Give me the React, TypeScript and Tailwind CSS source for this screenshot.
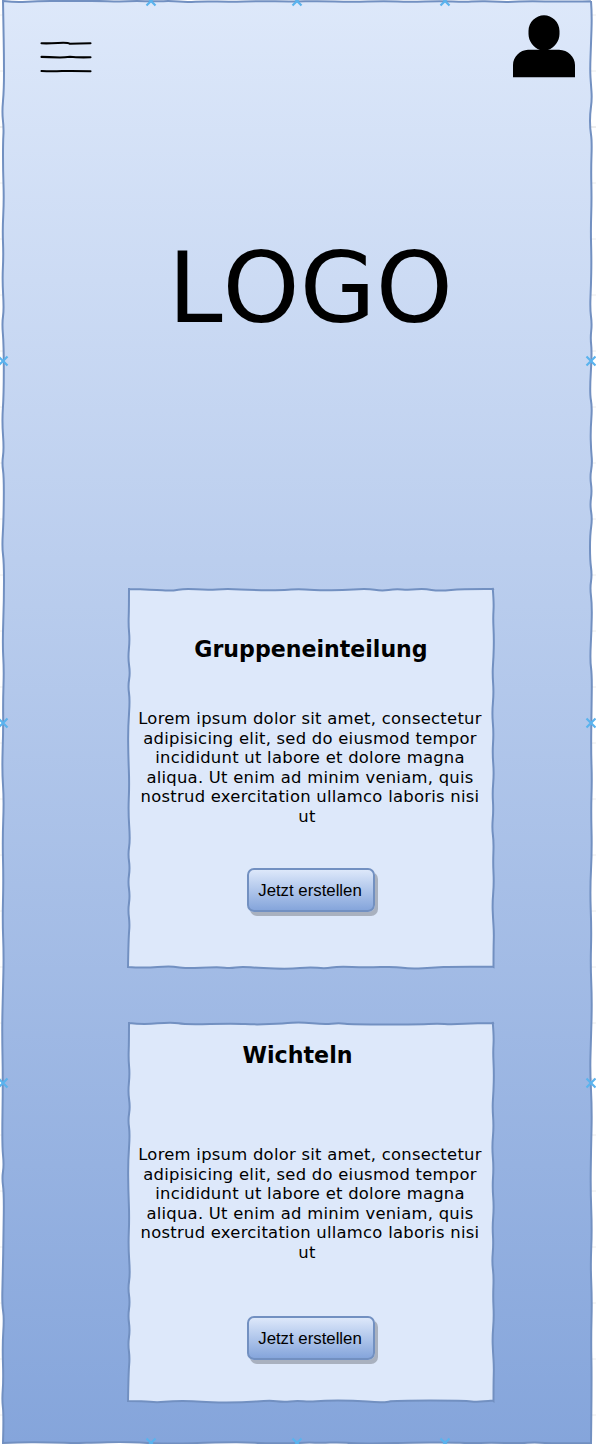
import React from "react";

type Pt = [number, number];

// Quadratic smoothing through the midpoints of neighbouring points.
function smooth(points: Pt[]): string {
  let d = "";
  for (let i = 1; i < points.length - 1; i++) {
    const [x, y] = points[i];
    const [nx, ny] = points[i + 1];
    const last = i === points.length - 2;
    d += ` Q${x},${y} ${last ? nx : (x + nx) / 2},${last ? ny : (y + ny) / 2}`;
  }
  return d;
}

function outline(top: Pt[], right: Pt[], bottom: Pt[], left: Pt[]): string {
  const b = [...bottom].reverse();
  const l = [...left].reverse();
  return `M${top[0]}${smooth(top)} L${right[0]}${smooth(right)} L${b[0]}${smooth(b)} L${l[0]}${smooth(l)} Z`;
}

const horizontal = (xs: number[], ys: number[]): Pt[] => xs.map((x, i) => [x, ys[i]]);
const vertical = (ys: number[], xs: number[]): Pt[] => ys.map((y, i) => [xs[i], y]);

const frame = outline(
  horizontal(
    [3, 15, 30, 45, 70, 95, 120, 135, 155, 172, 186, 205, 230, 260, 290, 320, 350, 385, 410, 440, 465, 478, 492, 508, 530, 560, 591],
    [1, 2.3, 1.6, 0.9, 1.2, 0.8, 1.6, 0.9, 1.4, 0.9, 2.2, 1.2, 1.9, 1, 1.7, 0.9, 2, 1.1, 2, 1, 2, 1.2, 1.4, 2.2, 0.9, 1.9, 1.2],
  ),
  vertical(
    [1, 14, 45, 70, 85, 99, 114, 128, 141, 170, 200, 230, 260, 285, 309, 324, 338, 352, 393, 407, 430, 450, 463, 477, 491, 505, 519, 535, 560, 575, 588, 604, 630, 660, 675, 710, 750, 780, 810, 850, 890, 930, 965, 1000, 1040, 1070, 1110, 1150, 1190, 1230, 1265, 1300, 1340, 1380, 1443],
    [591, 592, 591, 590, 591, 592, 590, 590, 592, 591, 591.7, 590.7, 591.5, 591, 590, 592, 590.4, 592, 589.6, 592.2, 590.5, 591, 592.3, 590, 592, 590, 592.3, 590, 590, 592, 590, 592, 591.5, 590, 592, 591.5, 591, 592, 591, 592, 590, 591.5, 590.5, 592, 591, 590, 592, 591, 590.5, 592, 590.5, 592, 591, 591.8, 591],
  ),
  horizontal(
    [3, 20, 50, 78, 95, 120, 140, 155, 180, 205, 225, 245, 265, 290, 308, 322, 338, 355, 380, 410, 450, 470, 490, 520, 535, 555, 591],
    [1443, 1442, 1442.3, 1443.2, 1442.5, 1442, 1442.5, 1443.4, 1443.6, 1442.7, 1442.2, 1442.1, 1443.3, 1443.4, 1442.4, 1443, 1442.2, 1443.3, 1443.5, 1442.6, 1442.3, 1443.2, 1442.6, 1443.2, 1442.4, 1443.4, 1443],
  ),
  vertical(
    [1, 20, 55, 90, 112, 128, 142, 170, 200, 230, 255, 280, 310, 323, 345, 395, 421, 449, 463, 477, 520, 547, 562, 600, 644, 670, 700, 730, 770, 800, 840, 880, 920, 955, 990, 1030, 1080, 1145, 1165, 1178, 1193, 1232, 1275, 1304, 1318, 1345, 1380, 1400, 1415, 1443],
    [3, 3.3, 4, 4, 2, 3.8, 3, 3, 4, 2.5, 3.5, 2.3, 4, 2, 3.8, 3.8, 2, 4, 2, 4, 3.6, 2, 4, 4, 2.5, 4, 3, 3.3, 2, 4, 2.5, 3.5, 2.5, 3.8, 3, 2, 3, 2, 4, 2, 4, 3.6, 2.8, 2, 4.2, 2.4, 3.5, 2, 3.8, 3],
  ),
);

const leftWobble = vertical(
  [0, 20, 37, 52, 70, 85, 98, 112, 140, 168, 196, 224, 252, 266, 280, 294, 308, 322, 336, 350, 379],
  [2, 2, 1.4, 2.8, 1, 3.2, 1, 3, 1, 1.3, 2.4, 1.2, 3.2, 1, 3, 1, 3, 1, 2.8, 1.5, 1],
);
const rightWobble = vertical(
  [0, 15, 30, 50, 70, 85, 105, 125, 145, 165, 185, 205, 222, 240, 254, 275, 295, 315, 330, 345, 360, 379],
  [365.7, 367, 366, 367, 366.5, 365.4, 366.8, 365, 366.7, 365.4, 367, 365.4, 366.5, 365, 366.8, 366, 367, 365.4, 366, 367, 366.5, 366.5],
);
const firstCard = outline(
  horizontal(
    [2, 26, 44.7, 58, 80, 100, 126, 158, 170, 186, 213, 240, 255, 268, 282, 297, 312, 336, 366],
    [1, 1.7, 3, 0.4, 2, 0.8, 2, 2.4, 0.8, 2, 2.4, 0.6, 3, 1, 2, 0.6, 3.2, 0.8, 1],
  ),
  rightWobble,
  horizontal(
    [1, 16, 45, 56, 92, 103, 114, 133, 163, 183, 198, 211, 239, 268, 283, 309, 324, 366],
    [379, 380, 378, 380.6, 379, 380.4, 378.6, 380, 381, 379, 380.6, 378.5, 379.6, 378.5, 381, 379.5, 378.6, 378.8],
  ),
  leftWobble,
);
const secondCard = outline(
  horizontal(
    [2, 16, 45, 58, 108, 128, 157, 173, 198, 211, 225, 293, 310, 325, 350, 366],
    [1, 2.6, 0, 2.6, 1.3, 2.7, 1.5, 0.2, 2.5, 1, 2.3, 2.5, 1.5, 2.4, 1, 1],
  ),
  rightWobble,
  horizontal(
    [1, 16, 30, 45, 66, 83, 116, 143, 156, 170, 183, 196, 226, 255, 268, 338, 351, 366],
    [379, 379, 380.6, 379, 379, 380.5, 380.5, 378.3, 380, 378.8, 379.8, 378.5, 378.5, 380.7, 378.6, 378.6, 380.2, 378.6],
  ),
  leftWobble,
);

function MenuIcon() {
  return (
    <svg width="52" height="34" viewBox="0 0 52 34" fill="none" stroke="#000" strokeWidth="2.1" strokeLinecap="round" aria-hidden="true">
      <path d="M1.500,2.300 Q8,2.600 18,2 T30,2.800 Q39,2.400 50.500,2.300" />
      <path d="M1.500,15.900 Q8,15.900 20,16.500 Q25,16.200 30,15.800 Q37,16.600 50.500,16.300" />
      <path d="M1.500,30 Q12,30.600 22,30 Q36,29.800 50.500,30.200" />
    </svg>
  );
}

function UserIcon() {
  return (
    <svg width="62" height="63" viewBox="0 0 62 63" aria-hidden="true">
      <path d="M31 0.200C39 0.200 46.500 7 46.500 16V19C46.500 26 41.500 33 35 34.800H46C55 35 62 42 62 50V62.200H0V50C0 42 7 35 15 34.800H27C20.500 33 15.500 26 15.500 19V16C15.500 7 23 0.200 31 0.200Z" />
    </svg>
  );
}

const anchors: Pt[] = [
  [151, 1], [297, 1], [445, 1], [3, 361], [3, 723], [3, 1083],
  [591, 361], [591, 723], [591, 1083], [151, 1443], [297, 1443], [445, 1443],
];

const lines = [
  "Lorem ipsum dolor sit amet, consectetur",
  "adipisicing elit, sed do eiusmod tempor",
  "incididunt ut labore et dolore magna",
  "aliqua. Ut enim ad minim veniam, quis",
  "nostrud exercitation ullamco laboris nisi",
  "ut",
];

function Card({ title, path, first }: { title: string; path: string; first: boolean }) {
  return (
    <section className="relative ml-[127px] flex h-[380px] w-[368px] flex-col items-center">
      <svg className="absolute inset-0 overflow-visible" width="368" height="380" aria-hidden="true">
        <path d={path} fill="#dde8fa" stroke="#7290c1" strokeWidth="2" />
      </svg>
      <h2
        className={
          first
            ? "relative mt-[47px] h-7 text-[22.1px] leading-7 font-bold"
            : "relative mt-[19px] mr-[27px] h-7 text-[22.2px] leading-7 font-bold"
        }
      >
        {title}
      </h2>
      <p
        className={
          (first ? "mt-[46px]" : "mt-[76px]") +
          " relative mr-[2px] text-center text-[16.4px] leading-[19.6px] tracking-[0.26px] whitespace-nowrap"
        }
      >
        {lines.map((line) => (
          <span key={line} className="block last:pr-[6px]">{line}</span>
        ))}
      </p>
      <button
        className={
          (first ? "mt-[41px]" : "mt-[53px]") +
          " relative h-[44px] w-[128px] rounded-[7px] border-2 border-[#7290c1] bg-linear-to-b from-[#dde8fa] to-[#85a5db] pt-[2px] pr-[2px] font-['Liberation_Sans',sans-serif] text-[16.8px] leading-[38px] whitespace-nowrap shadow-[3px_4px_0_#a9b1bf]"
        }
      >
        Jetzt erstellen
      </button>
    </section>
  );
}

export default function App() {
  return (
    <main className="relative h-[1444px] w-[596px] overflow-hidden bg-white font-['DejaVu_Sans',sans-serif] text-black">
      <svg className="absolute inset-0" width="596" height="1444" aria-hidden="true">
        <defs>
          <linearGradient id="sky" x1="0" y1="0" x2="0" y2="1">
            <stop offset="0" stopColor="#dde8fa" />
            <stop offset="1" stopColor="#85a5db" />
          </linearGradient>
        </defs>
        {Array.from({ length: 26 }, (_, i) => (
          <path key={i} d={`M0,${15 + i * 56}H596`} stroke={i === 2 ? "#dcdcdc" : "#ececec"} />
        ))}
        <path d={frame} fill="url(#sky)" stroke="#7290c1" strokeWidth="2" />
        {anchors.map(([x, y]) => (
          <path
            key={`${x}-${y}`}
            d={`M${x - 4.5},${y - 4.5}l9,9m0,-9l-9,9`}
            stroke="#5ab3ee"
            strokeWidth="2.2"
          />
        ))}
      </svg>
      <div className="relative flex h-full flex-col">
        <header className="flex h-[78px] shrink-0 items-start justify-between pr-[21px] pl-10">
          <button aria-label="Menü" className="mt-[41px]"><MenuIcon /></button>
          <button aria-label="Profil" className="mt-[15px]"><UserIcon /></button>
        </header>
        <h1 className="mt-[151px] ml-[168px] h-[118px] text-[98px] leading-[118px] [font-kerning:none]">LOGO</h1>
        <div className="mt-[241px] flex flex-col gap-[54px]">
          <Card title="Gruppeneinteilung" path={firstCard} first />
          <Card title="Wichteln" path={secondCard} first={false} />
        </div>
      </div>
    </main>
  );
}
